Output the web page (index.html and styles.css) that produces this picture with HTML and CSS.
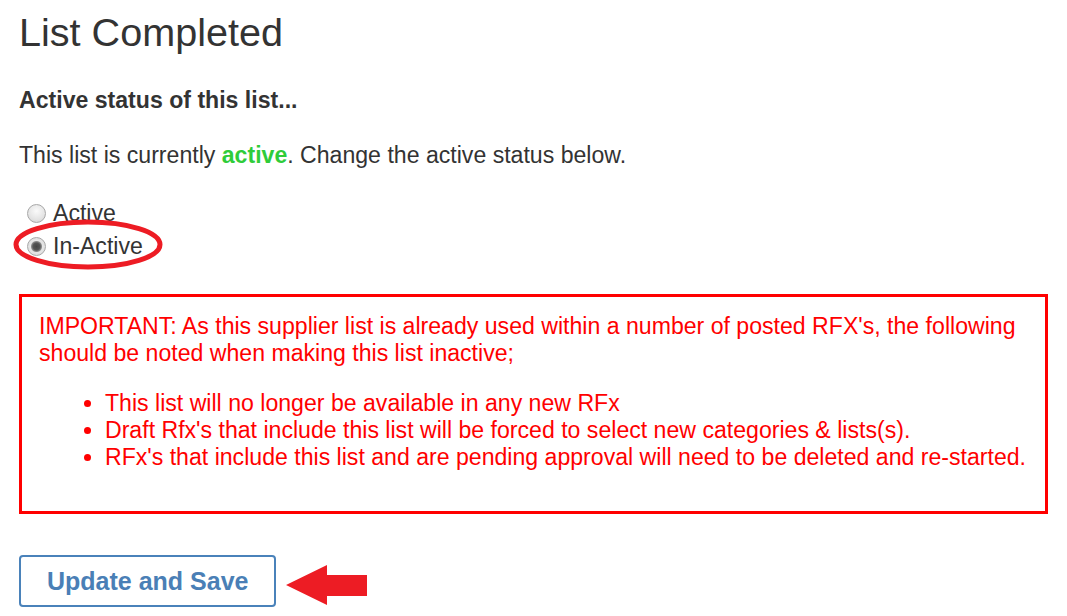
FILE: index.html
```html
<!doctype html>
<html lang="en">
<head>
    <meta charset="utf-8">
    <title>List Completed</title>
    <link rel="stylesheet" href="styles.css">
</head>
<body>
    <div class="page">
        <h1 class="title">List Completed</h1>

        <h4 class="status-heading">Active status of this list...</h4>

        <p class="status-text">This list is currently <span class="state-active">active</span>. Change the active status below.</p>

        <div class="status-options">
            <label class="option"><input type="radio" name="status" value="1"> Active</label>
            <label class="option"><input type="radio" name="status" value="0" checked> In-Active</label>

            <!-- annotation ring -->
            <svg class="highlight" width="150" height="51" viewBox="0 0 150 51">
                <ellipse cx="75" cy="25.5" rx="72" ry="22.5" fill="none" stroke="#ed1c24" stroke-width="5"/>
            </svg>
        </div>

        <div class="warning-box">
            <p>IMPORTANT: As this supplier list is already used within a number of posted RFX's, the following should be noted when making this list inactive;</p>
            <ul>
                <li>This list will no longer be available in any new RFx</li>
                <li>Draft Rfx's that include this list will be forced to select new categories &amp; lists(s).</li>
                <li>RFx's that include this list and are pending approval will need to be deleted and re-started.</li>
            </ul>
        </div>

        <div class="actions">
            <button class="btn-save">Update and Save</button>
            <svg class="pointer" width="81" height="40" viewBox="0 0 81 40">
                <polygon points="0,20 41,0 41,10 81,10 81,31 41,31 41,40" fill="#ed1c24"/>
            </svg>
        </div>
    </div>
</body>
</html>
```

FILE: styles.css
```css
/* General styles */
body {
    margin: 0;
    font-family: "Liberation Sans", Arial, sans-serif;
    font-size: 23.1px;
    line-height: 27px;
    color: #333;
    background: #fff;
}

.page {
    padding: 0 19px;
}

.title {
    margin: 11px 0 0;
    font-size: 39.6px;
    line-height: 43px;
    font-weight: normal;
}

.status-heading {
    margin: 33px 0 0;
    font-size: 23.1px;
    font-weight: bold;
}

.status-text {
    margin: 28px 0 0;
}

.state-active {
    color: #2fcc3a;
    font-weight: bold;
}

/* radios */
.status-options {
    position: relative;
    margin-top: 28px;
}

.option {
    display: flex;
    align-items: center;
    height: 33px;
}

.option input {
    appearance: none;
    -webkit-appearance: none;
    flex: none;
    width: 19px;
    height: 19px;
    margin: 0 7px 0 8px;
    border: 1px solid #a8a8a8;
    border-radius: 50%;
    background: radial-gradient(circle at 50% 35%, #fafafa 0%, #e4e4e4 60%, #d0d0d0 100%);
}

.option input:checked {
    background: radial-gradient(circle, #444 0, #555 3.5px, #8a8a8a 5px, #e6e6e6 6px, #d8d8d8 100%);
}

.highlight {
    position: absolute;
    left: -6px;
    top: 22px;
}

/* warning */
.warning-box {
    margin-top: 31px;
    border: 3px solid #ff0000;
    padding: 16px 17px 17px;
    color: #ff0000;
}

.warning-box p {
    margin: 0 0 23px;
}

.warning-box ul {
    margin: 0 0 23px;
    padding-left: 66px;
}

/* actions */
.actions {
    display: flex;
    align-items: center;
    margin-top: 41px;
}

.btn-save {
    height: 52px;
    padding: 0 26px;
    border: 2px solid #4a82ba;
    border-radius: 4px;
    background: #fff;
    color: #4a7fb6;
    font-family: inherit;
    font-size: 25px;
    font-weight: bold;
    cursor: pointer;
}

.pointer {
    margin-left: 10px;
    margin-top: 8px;
}
```
